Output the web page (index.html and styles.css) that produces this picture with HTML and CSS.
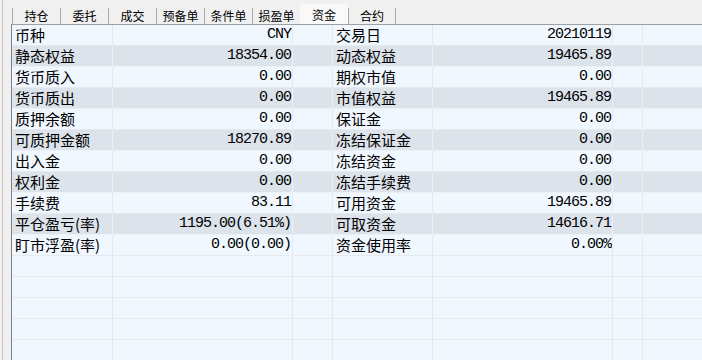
FILE: index.html
```html
<!DOCTYPE html>
<html lang="zh-CN">
<head>
    <meta charset="UTF-8">
    <title>资金</title>
    <link rel="stylesheet" href="styles.css">
</head>
<body>
    <div class="frame">
        <div class="tabs">
            <div class="tab">持仓</div>
            <div class="tab">委托</div>
            <div class="tab">成交</div>
            <div class="tab">预备单</div>
            <div class="tab">条件单</div>
            <div class="tab">损盈单</div>
            <div class="tab active">资金</div>
            <div class="tab last">合约</div>
        </div>

        <div class="grid">
            <div class="row">
                <div class="cell label">币种</div><div class="cell num">CNY</div><div class="cell"></div>
                <div class="cell label">交易日</div><div class="cell num">20210119</div><div class="cell"></div><div class="cell"></div>
            </div>
            <div class="row alt">
                <div class="cell label">静态权益</div><div class="cell num">18354.00</div><div class="cell"></div>
                <div class="cell label">动态权益</div><div class="cell num">19465.89</div><div class="cell"></div><div class="cell"></div>
            </div>
            <div class="row">
                <div class="cell label">货币质入</div><div class="cell num">0.00</div><div class="cell"></div>
                <div class="cell label">期权市值</div><div class="cell num">0.00</div><div class="cell"></div><div class="cell"></div>
            </div>
            <div class="row alt">
                <div class="cell label">货币质出</div><div class="cell num">0.00</div><div class="cell"></div>
                <div class="cell label">市值权益</div><div class="cell num">19465.89</div><div class="cell"></div><div class="cell"></div>
            </div>
            <div class="row">
                <div class="cell label">质押余额</div><div class="cell num">0.00</div><div class="cell"></div>
                <div class="cell label">保证金</div><div class="cell num">0.00</div><div class="cell"></div><div class="cell"></div>
            </div>
            <div class="row alt">
                <div class="cell label">可质押金额</div><div class="cell num">18270.89</div><div class="cell"></div>
                <div class="cell label">冻结保证金</div><div class="cell num">0.00</div><div class="cell"></div><div class="cell"></div>
            </div>
            <div class="row">
                <div class="cell label">出入金</div><div class="cell num">0.00</div><div class="cell"></div>
                <div class="cell label">冻结资金</div><div class="cell num">0.00</div><div class="cell"></div><div class="cell"></div>
            </div>
            <div class="row alt">
                <div class="cell label">权利金</div><div class="cell num">0.00</div><div class="cell"></div>
                <div class="cell label">冻结手续费</div><div class="cell num">0.00</div><div class="cell"></div><div class="cell"></div>
            </div>
            <div class="row">
                <div class="cell label">手续费</div><div class="cell num">83.11</div><div class="cell"></div>
                <div class="cell label">可用资金</div><div class="cell num">19465.89</div><div class="cell"></div><div class="cell"></div>
            </div>
            <div class="row alt">
                <div class="cell label">平仓盈亏(率)</div><div class="cell num">1195.00(6.51%)</div><div class="cell"></div>
                <div class="cell label">可取资金</div><div class="cell num">14616.71</div><div class="cell"></div><div class="cell"></div>
            </div>
            <div class="row">
                <div class="cell label">盯市浮盈(率)</div><div class="cell num">0.00(0.00)</div><div class="cell"></div>
                <div class="cell label">资金使用率</div><div class="cell num">0.00%</div><div class="cell"></div><div class="cell"></div>
            </div>
            <div class="row"><div class="cell"></div><div class="cell"></div><div class="cell"></div><div class="cell"></div><div class="cell"></div><div class="cell"></div><div class="cell"></div></div>
            <div class="row"><div class="cell"></div><div class="cell"></div><div class="cell"></div><div class="cell"></div><div class="cell"></div><div class="cell"></div><div class="cell"></div></div>
            <div class="row"><div class="cell"></div><div class="cell"></div><div class="cell"></div><div class="cell"></div><div class="cell"></div><div class="cell"></div><div class="cell"></div></div>
            <div class="row"><div class="cell"></div><div class="cell"></div><div class="cell"></div><div class="cell"></div><div class="cell"></div><div class="cell"></div><div class="cell"></div></div>
            <div class="row"><div class="cell"></div><div class="cell"></div><div class="cell"></div><div class="cell"></div><div class="cell"></div><div class="cell"></div><div class="cell"></div></div>
        </div>
    </div>
</body>
</html>
```

FILE: styles.css
```css
* {
    margin: 0;
    padding: 0;
    box-sizing: border-box;
}

body {
    width: 702px;
    height: 360px;
    overflow: hidden;
    background: #f0f0f0;
    padding-left: 2px;
    font-family: "Noto Sans CJK SC", sans-serif;
    color: #000;
}

.frame {
    height: 360px;
    overflow: hidden;
    border-left: 1px solid #c4c4c4;
    padding-left: 8px;
    padding-top: 8px;
}

.tabs {
    display: flex;
    height: 16px;
    padding-left: 1px;
}

.tab {
    width: 48px;
    height: 16px;
    border-left: 1px solid #a8a8a8;
    font-size: 12px;
    line-height: 16px;
    text-align: center;
}

.tab.active {
    border-left: none;
    background: #f9f9f9;
    margin-top: -4px;
    height: 20px;
    line-height: 22px;
}

.tab.last {
    border-right: 1px solid #a8a8a8;
}

.grid {
    border-top: 1px solid #a0a0a0;
    border-left: 1px solid #808080;
    width: 700px;
}

.row {
    display: grid;
    grid-template-columns: 101px 180px 40px 100px 180px 30px 1fr;
    height: 21px;
    background: #f0f7ff;
}

.row.alt {
    background: #dce3eb;
}

.cell {
    height: 21px;
    border-right: 1px solid #e6eaee;
    border-bottom: 1px solid #e6eaee;
    font-size: 15px;
    line-height: 20px;
    white-space: nowrap;
    overflow: hidden;
}

.row.alt .cell {
    border-color: #edf0f4;
}

.label {
    padding-left: 3px;
}

.num {
    text-align: right;
    padding-right: 1px;
    font-family: "Liberation Mono", monospace;
    letter-spacing: -1px;
}
```
